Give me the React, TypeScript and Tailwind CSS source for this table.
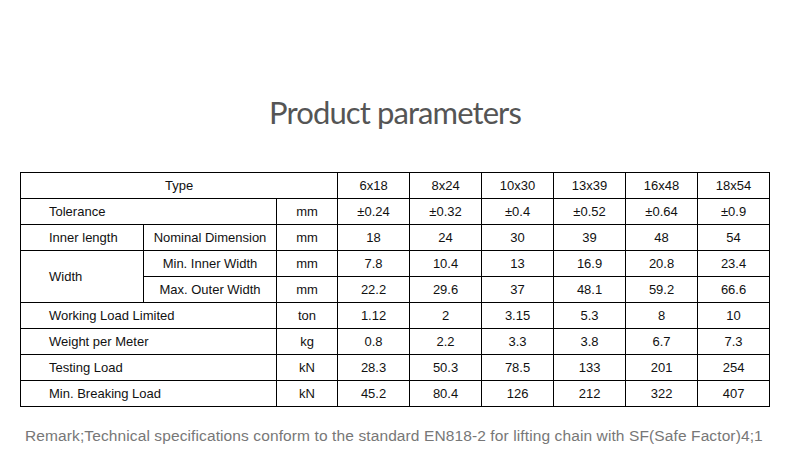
import React from "react";

const sizes = ["6x18", "8x24", "10x30", "13x39", "16x48", "18x54"];

type Row = { label: string; sub?: string; unit: string; values: string[] };

const td = "border border-black text-center p-0";
const tdl = "border border-black text-left p-0 pl-[28px]";

export default function App() {
  return (
    <div className="w-[790px] h-[465px] bg-white" style={{ fontFamily: '"Liberation Sans", Arial, sans-serif' }}>
      <div className="pt-[92px] h-[172px]">
        <div
          className="text-center text-[#555555] text-[31px] leading-[40px] tracking-[-0.9px]"
          style={{ fontFamily: 'Lato, "Open Sans", sans-serif' }}
        >
          Product parameters
        </div>
      </div>
      <div className="pl-[20px]">
        <table className="border-collapse w-[749px] table-fixed text-[13px] text-[#111]">
          <colgroup>
            <col className="w-[123px]" />
            <col className="w-[133px]" />
            <col className="w-[61px]" />
            <col className="w-[72px]" />
            <col className="w-[72px]" />
            <col className="w-[72px]" />
            <col className="w-[72px]" />
            <col className="w-[72px]" />
            <col className="w-[72px]" />
          </colgroup>
          <tbody>
            <tr className="h-[26px]">
              <td className={td} colSpan={3}>Type</td>
              {sizes.map((s) => (
                <td key={s} className={td}>{s}</td>
              ))}
            </tr>
            <tr className="h-[26px]">
              <td className={tdl} colSpan={2}>Tolerance</td>
              <td className={td}>mm</td>
              {["±0.24", "±0.32", "±0.4", "±0.52", "±0.64", "±0.9"].map((v) => (
                <td key={v} className={td}>{v}</td>
              ))}
            </tr>
            <tr className="h-[26px]">
              <td className={tdl}>Inner length</td>
              <td className={td}>Nominal Dimension</td>
              <td className={td}>mm</td>
              {["18", "24", "30", "39", "48", "54"].map((v) => (
                <td key={v} className={td}>{v}</td>
              ))}
            </tr>
            <tr className="h-[26px]">
              <td className={tdl} rowSpan={2}>Width</td>
              <td className={td}>Min. Inner Width</td>
              <td className={td}>mm</td>
              {["7.8", "10.4", "13", "16.9", "20.8", "23.4"].map((v) => (
                <td key={v} className={td}>{v}</td>
              ))}
            </tr>
            <tr className="h-[26px]">
              <td className={td}>Max. Outer Width</td>
              <td className={td}>mm</td>
              {["22.2", "29.6", "37", "48.1", "59.2", "66.6"].map((v) => (
                <td key={v} className={td}>{v}</td>
              ))}
            </tr>
            {([
              { label: "Working Load Limited", unit: "ton", values: ["1.12", "2", "3.15", "5.3", "8", "10"] },
              { label: "Weight per Meter", unit: "kg", values: ["0.8", "2.2", "3.3", "3.8", "6.7", "7.3"] },
              { label: "Testing Load", unit: "kN", values: ["28.3", "50.3", "78.5", "133", "201", "254"] },
              { label: "Min. Breaking Load", unit: "kN", values: ["45.2", "80.4", "126", "212", "322", "407"] },
            ] as Row[]).map((r) => (
              <tr key={r.label} className="h-[26px]">
                <td className={tdl} colSpan={2}>{r.label}</td>
                <td className={td}>{r.unit}</td>
                {r.values.map((v, i) => (
                  <td key={i} className={td}>{v}</td>
                ))}
              </tr>
            ))}
          </tbody>
        </table>
      </div>
      <div className="pl-[25px] pt-[20px] text-[15.5px] leading-[18px] tracking-[0.11px] text-[#777777]">
        Remark;Technical specifications conform to the standard EN818-2 for lifting chain with SF(Safe Factor)4;1
      </div>
    </div>
  );
}
